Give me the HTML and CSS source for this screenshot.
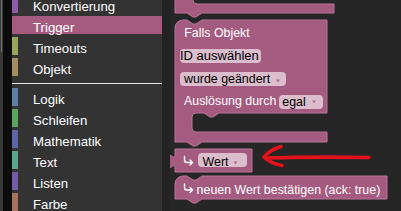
FILE: index.html
```html
<!DOCTYPE html>
<html lang="de">
<head>
<meta charset="utf-8">
<title>Blockly Trigger</title>
<link rel="stylesheet" href="styles.css">
</head>
<body>
<div class="app">
  <div class="edge"><div class="edge-line"></div></div>
  <div class="gutter"></div>
  <nav class="toolbox">
    <div class="cats">
      <div class="cat"><span class="swatch c-konv"></span><span class="label">Konvertierung</span></div>
      <div class="cat selected"><span class="swatch"></span><span class="label">Trigger</span></div>
      <div class="cat"><span class="swatch c-time"></span><span class="label">Timeouts</span></div>
      <div class="cat"><span class="swatch c-obj"></span><span class="label">Objekt</span></div>
      <div class="sep"></div>
      <div class="cat"><span class="swatch c-logic"></span><span class="label">Logik</span></div>
      <div class="cat"><span class="swatch c-loop"></span><span class="label">Schleifen</span></div>
      <div class="cat"><span class="swatch c-math"></span><span class="label">Mathematik</span></div>
      <div class="cat"><span class="swatch c-text"></span><span class="label">Text</span></div>
      <div class="cat"><span class="swatch c-list"></span><span class="label">Listen</span></div>
      <div class="cat"><span class="swatch c-color"></span><span class="label">Farbe</span></div>
    </div>
  </nav>
  <div class="split"></div>
  <div class="workspace">
    <svg class="ws" width="231" height="211" viewBox="170 0 231 211" xmlns="http://www.w3.org/2000/svg">
      <!-- upper C-block (bottom arm) -->
      <path class="blk" d="M175,-10 H193 V0 Q193,4 197,4 H334 V13 H202 l-6,4 h-3 l-6,-4 H175 Z"/>
      <!-- Falls Objekt block -->
      <path class="blk" d="M175,28 A8,8 0 0,1 183,20 H187 l6,4 h3 l6,-4 H327 V113 H219 l-6,4 h-3 l-6,-4 H196 Q192,113 192,117 V128 Q192,132 196,132 H327 V142 H202 l-6,4 h-3 l-6,-4 H175 Z"/>
      <text class="bt" x="184.3" y="36.5">Falls Objekt</text>
      <rect class="fld" x="180" y="49" width="81" height="14" rx="4"/>
      <text class="ft id" x="180" y="60">ID auswählen</text>
      <rect class="fld" x="180" y="72" width="106" height="14" rx="4"/>
      <text class="ft" x="184" y="82.5">wurde geändert</text>
      <polygon class="arr" points="276,79.5 280,79.5 278,82.5"/>
      <text class="bt" x="184" y="105.3">Auslösung durch</text>
      <rect class="fld" x="279" y="95" width="44" height="14" rx="4"/>
      <text class="ft" x="282.3" y="105.5">egal</text>
      <polygon class="arr" points="312,100.5 316,100.5 314,103.5"/>

      <!-- Wert value block -->
      <path class="blk" d="M175,149 H252 V172 H175 V169 c0,-10 -8,8 -8,-7.5 s8,2.5 8,-7.5 Z"/>
      <path class="ico" d="M184.5,156.5 V160 Q184.5,162.5 187,162.5 H192.5 M190,160 L192.6,162.5 L190,165"/>
      <rect class="fld" x="198" y="153" width="49" height="14" rx="4"/>
      <text class="ft" x="202.6" y="165.5">Wert</text>
      <polygon class="arr" points="233.5,161.5 237.5,161.5 235.5,164.5"/>

      <!-- neuen Wert bestätigen block -->
      <path class="blk" d="M175,184 A8,8 0 0,1 183,176 H187 l6,4 h3 l6,-4 H387 V199 H202 l-6,4 h-3 l-6,-4 H175 Z"/>
      <path class="ico" d="M184.5,184 V187.5 Q184.5,190 187,190 H192.5 M190,187.5 L192.6,190 L190,192.5"/>
      <text class="bt" x="196.6" y="193.5">neuen Wert bestätigen (ack: true)</text>

      <!-- red annotation arrow -->
      <path class="red" d="M281,146.5 C273,149 267,153 264,157 C268,161 274,164 282,165.5 M266,158 C300,157 340,157 369,157.5"/>
    </svg>
  </div>
</div>
</body>
</html>
```

FILE: styles.css
```css
html, body {
  margin: 0;
  padding: 0;
  background: #262626;
}

body {
  width: 401px;
  height: 211px;
  overflow: hidden;
  font-family: "Liberation Sans", Arial, sans-serif;
}

.app {
  display: flex;
  height: 211px;
}

.edge {
  width: 3px;
  flex: none;
  background: #3a3a3a;
  display: flex;
  justify-content: center;
}

.edge-line {
  width: 1px;
  height: 52px;
  background: #6e6e6e;
}

.gutter {
  width: 9px;
  flex: none;
  background: #0c0c0c;
}

.toolbox {
  width: 150px;
  flex: none;
  background: #333333;
  overflow: hidden;
}

.cats {
  display: flex;
  flex-direction: column;
  gap: 3px;
  margin-top: -5px;
}

.cat {
  display: flex;
  height: 18px;
  color: #ffffff;
  font-size: 13.2px;
}

.swatch {
  width: 6px;
  flex: none;
}

.label {
  padding: 4px 0 0 15px;
  line-height: 15px;
  white-space: nowrap;
}

.cat.selected {
  background: #a55b80;
}

.c-konv { background: #8f5ba8; }
.c-time { background: #99a55b; }
.c-obj { background: #a58d5b; }
.c-logic { background: #5b80a5; }
.c-loop { background: #5ba55b; }
.c-math { background: #5b67a5; }
.c-text { background: #5ba58c; }
.c-list { background: #745ba5; }
.c-color { background: #a5745b; }

.sep {
  height: 1px;
  margin: 4px 0 1px;
  background: #e6e6e6;
}

.split {
  width: 8px;
  flex: none;
  background: #232323;
}

.workspace {
  width: 231px;
  flex: none;
  background: #262626;
}

.ws {
  display: block;
}

.blk {
  fill: #a55b80;
  stroke: #b97799;
  stroke-width: 1;
}

.fld {
  fill: #dbbdcc;
}

.bt {
  font-family: "Liberation Sans", Arial, sans-serif;
  font-size: 12.4px;
  fill: #ffffff;
}

.ft {
  font-family: "Liberation Sans", Arial, sans-serif;
  font-size: 12.4px;
  fill: #000000;
}

.ft.id {
  font-size: 13px;
}

.arr {
  fill: #a87490;
}

.ico {
  fill: none;
  stroke: #ffffff;
  stroke-width: 1.4;
  stroke-linecap: round;
  stroke-linejoin: round;
}

.red {
  fill: none;
  stroke: #e3121b;
  stroke-width: 3.6;
  stroke-linecap: round;
  stroke-linejoin: round;
}
```
